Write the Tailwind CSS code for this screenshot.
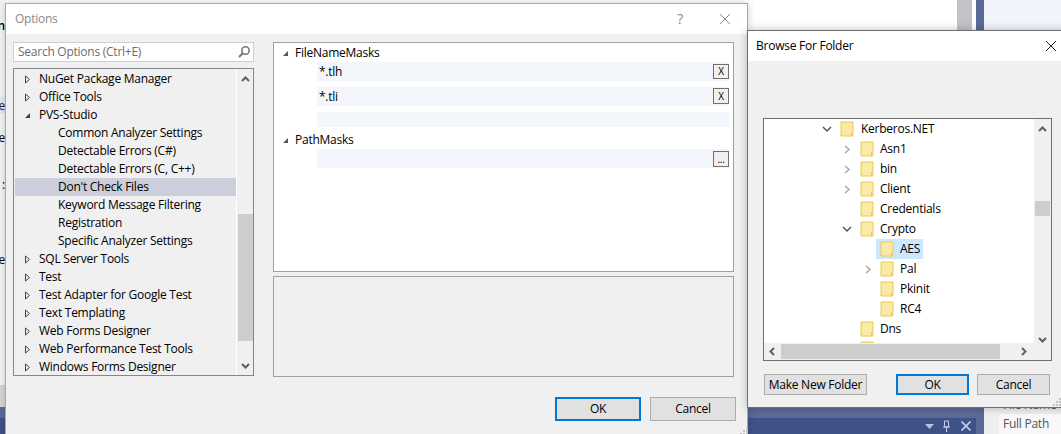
<!DOCTYPE html>
<html lang="en">
<head>
    <meta charset="UTF-8">
    <title>Options</title>
    <script src="https://cdn.jsdelivr.net/npm/@tailwindcss/browser@4"></script>
</head>
<body class="bg-white">
<div class="relative w-[1061px] h-[434px] overflow-hidden bg-white font-['Open_Sans',sans-serif] text-[12px] leading-[18px] tracking-[-0.25px] text-black">

    <!-- IDE behind the dialogs -->
    <div class="absolute left-0 top-0 w-[6px] h-[410px] bg-[#f5f5f5]"></div>
    <div class="absolute left-0 top-[97px] w-[6px] h-[16px] bg-[#e6e8f2]"></div>
    <div class="absolute left-0 top-[385px] w-[6px] h-[25px] bg-[#d8d8d8]"></div>
    <div class="absolute left-[-30px] top-[17px] w-[35px] text-right font-semibold">lin</div>
    <div class="absolute left-[-30px] top-[97px] w-[35px] text-right text-[#223]">ee</div>
    <div class="absolute left-[-30px] top-[129px] w-[35px] text-right">ce</div>
    <div class="absolute left-[-30px] top-[176px] w-[35px] text-right">:</div>
    <div class="absolute left-[-30px] top-[251px] w-[35px] text-right">ne</div>
    <div class="absolute left-0 top-[407px] w-[976px] h-[11px] bg-[#5d6a96]"></div>
    <div class="absolute left-0 top-[418px] w-[976px] h-[16px] bg-[#3f5288] flex items-center justify-end gap-[8px] pr-[5px]">
        <svg width="9" height="5" viewBox="0 0 9 5"><path d="M0 0h9L4.500 5z" fill="#b9c3dc"/></svg>
        <svg width="9" height="12" viewBox="0 0 9 12"><path d="M2.500 1h4v6h-4zM1 7h7M4.500 7v5" fill="none" stroke="#c5cfe6"/></svg>
        <svg class="ml-[2px]" width="10" height="10" viewBox="0 0 10 10"><path d="M0.500 0.500l9 9M9.500 0.500l-9 9" fill="none" stroke="#c5cfe6" stroke-width="1.600"/></svg>
    </div>
    <div class="absolute left-[957px] top-0 w-[15px] h-[30px] bg-[#c2c3c9]"></div>
    <div class="absolute left-[976px] top-0 w-[8px] h-[434px] bg-[#5a6a97]"></div>
    <div class="absolute left-[984px] top-0 w-[77px] h-[30px] bg-[#f2f4fc]"></div>
    <div class="absolute left-[984px] top-[395px] w-[77px] h-[39px] bg-[#eeeeee] text-[#555] flex flex-col">
        <div class="h-[19px] leading-[20px] pl-[19px]">File Name</div>
        <div class="ml-[15px] h-[20px] pl-[4px] leading-[19px] bg-[#f8f8f8]">Full Path</div>
    </div>

    <!-- Options dialog -->
    <div class="absolute left-[5px] top-[3px] w-[743px] h-[440px] bg-[#f0f0f0] border border-[#a8a8a8] shadow-[0_0_8px_rgba(0,0,0,0.2)] flex flex-col">
        <div class="h-[30px] bg-white flex items-center justify-between pl-[9px] pr-[16px] shrink-0">
            <span class="text-[#8a8a8a] text-[12px]">Options</span>
            <div class="flex items-center gap-[36px]">
                <span class="text-[#8a8a8a] text-[14px]">?</span>
                <svg width="12" height="12" viewBox="0 0 12 12"><path d="M1 1l10 10M11 1L1 11" stroke="#8a8a8a" fill="none"/></svg>
            </div>
        </div>
        <div class="flex gap-[19px] pl-[7px] pt-[8px]">
            <!-- Left column -->
            <div class="w-[241px] flex flex-col gap-[6px] shrink-0">
                <div class="h-[20px] bg-white border border-[#ccced8] flex items-center justify-between pl-[4px] pr-[2px]">
                    <span class="text-[#6d6d6d]">Search Options (Ctrl+E)</span>
                    <svg width="14" height="14" viewBox="0 0 14 14"><circle cx="8.5" cy="5.5" r="3.7" fill="none" stroke="#777" stroke-width="1.6"/><path d="M6 8l-4 4" stroke="#777" stroke-width="2.2"/></svg>
                </div>
                <div class="h-[308px] border border-[#82878f] flex overflow-hidden">
                    <div class="flex-1 pt-[1px] pl-[1px]">
                        <div class="h-[18px] flex items-center pl-[9px]"><svg class="mr-[8px]" width="7" height="9" viewBox="0 0 7 9"><path d="M1.5 1l4 3.5-4 3.500z" fill="none" stroke="#444"/></svg>NuGet Package Manager</div>
                        <div class="h-[18px] flex items-center pl-[9px]"><svg class="mr-[8px]" width="7" height="9" viewBox="0 0 7 9"><path d="M1.5 1l4 3.5-4 3.500z" fill="none" stroke="#444"/></svg>Office Tools</div>
                        <div class="h-[18px] flex items-center pl-[9px]"><svg class="mr-[8px]" width="7" height="9" viewBox="0 0 7 9"><path d="M6 2v5H1z" fill="#444"/></svg>PVS-Studio</div>
                        <div class="h-[18px] flex items-center pl-[43px]">Common Analyzer Settings</div>
                        <div class="h-[18px] flex items-center pl-[43px]">Detectable Errors (C#)</div>
                        <div class="h-[18px] flex items-center pl-[43px]">Detectable Errors (C, C++)</div>
                        <div class="h-[18px] flex items-center pl-[43px] bg-[#ccceDB]">Don't Check Files</div>
                        <div class="h-[18px] flex items-center pl-[43px]">Keyword Message Filtering</div>
                        <div class="h-[18px] flex items-center pl-[43px]">Registration</div>
                        <div class="h-[18px] flex items-center pl-[43px]">Specific Analyzer Settings</div>
                        <div class="h-[18px] flex items-center pl-[9px]"><svg class="mr-[8px]" width="7" height="9" viewBox="0 0 7 9"><path d="M1.5 1l4 3.5-4 3.500z" fill="none" stroke="#444"/></svg>SQL Server Tools</div>
                        <div class="h-[18px] flex items-center pl-[9px]"><svg class="mr-[8px]" width="7" height="9" viewBox="0 0 7 9"><path d="M1.5 1l4 3.5-4 3.500z" fill="none" stroke="#444"/></svg>Test</div>
                        <div class="h-[18px] flex items-center pl-[9px]"><svg class="mr-[8px]" width="7" height="9" viewBox="0 0 7 9"><path d="M1.5 1l4 3.5-4 3.500z" fill="none" stroke="#444"/></svg>Test Adapter for Google Test</div>
                        <div class="h-[18px] flex items-center pl-[9px]"><svg class="mr-[8px]" width="7" height="9" viewBox="0 0 7 9"><path d="M1.5 1l4 3.5-4 3.500z" fill="none" stroke="#444"/></svg>Text Templating</div>
                        <div class="h-[18px] flex items-center pl-[9px]"><svg class="mr-[8px]" width="7" height="9" viewBox="0 0 7 9"><path d="M1.5 1l4 3.5-4 3.500z" fill="none" stroke="#444"/></svg>Web Forms Designer</div>
                        <div class="h-[18px] flex items-center pl-[9px]"><svg class="mr-[8px]" width="7" height="9" viewBox="0 0 7 9"><path d="M1.5 1l4 3.5-4 3.500z" fill="none" stroke="#444"/></svg>Web Performance Test Tools</div>
                        <div class="h-[18px] flex items-center pl-[9px]"><svg class="mr-[8px]" width="7" height="9" viewBox="0 0 7 9"><path d="M1.5 1l4 3.5-4 3.500z" fill="none" stroke="#444"/></svg>Windows Forms Designer</div>
                    </div>
                    <!-- Scrollbar -->
                    <div class="w-[17px] border-l border-white flex flex-col items-center">
                        <svg class="mt-[7px] shrink-0" width="9" height="7" viewBox="0 0 9 7"><path d="M1 5l3.5-3.5L8 5" fill="none" stroke="#606060" stroke-width="2"/></svg>
                        <div class="mt-[131px] w-[15px] h-[127px] bg-[#cdcdcd] shrink-0"></div>
                        <svg class="mt-[21px] shrink-0" width="9" height="7" viewBox="0 0 9 7"><path d="M1 2l3.5 3.5L8 2" fill="none" stroke="#606060" stroke-width="2"/></svg>
                    </div>
                </div>
            </div>
            <!-- Right column -->
            <div class="w-[461px] flex flex-col gap-[4px] shrink-0">
                <div class="h-[230px] bg-white border border-[#a0a0a0] pt-[1px]">
                    <div class="h-[18px] flex items-center pl-[8px]"><svg class="mr-[6px]" width="7" height="7" viewBox="0 0 7 7"><path d="M6 1v5H1z" fill="#555"/></svg>FileNameMasks</div>
                    <div class="ml-[43px] mr-[4px] h-[19px] bg-[#f3f6fb] flex items-center justify-between pl-[2px]">*.tlh<span class="w-[16px] h-[15px] bg-[#f0f0f0] border border-[#707070] text-[10px] leading-[13px] text-center">X</span></div>
                    <div class="ml-[43px] mr-[4px] mt-[6px] h-[19px] bg-[#f3f6fb] flex items-center justify-between pl-[2px]">*.tli<span class="-mt-[2px] w-[16px] h-[16px] bg-[#f0f0f0] border border-[#707070] text-[10px] leading-[14px] text-center">X</span></div>
                    <div class="ml-[43px] mr-[4px] mt-[6px] h-[15px] bg-[#f3f6fb]"></div>
                    <div class="mt-[4px] h-[18px] flex items-center pl-[8px]"><svg class="mr-[6px]" width="7" height="7" viewBox="0 0 7 7"><path d="M6 1v5H1z" fill="#555"/></svg>PathMasks</div>
                    <div class="ml-[43px] mr-[4px] h-[19px] bg-[#f3f6fb] flex items-center justify-end"><span class="w-[16px] h-[16px] bg-[#f0f0f0] border border-[#707070] text-[10px] leading-[14px] text-center">...</span></div>
                </div>
                <div class="h-[101px] border border-[#a0a0a0]"></div>
            </div>
        </div>
        <div class="flex gap-[9px] pl-[549px] pt-[20px]">
            <div class="w-[86px] h-[24px] bg-[#e1e1e1] border-2 border-[#0078d7] flex items-center justify-center">OK</div>
            <div class="w-[86px] h-[24px] bg-[#e1e1e1] border border-[#adadad] flex items-center justify-center">Cancel</div>
        </div>
        <!-- Resize grip -->
        <svg class="absolute left-[734px] top-[423px]" width="8" height="8" viewBox="0 0 8 8"><path d="M6 0h2v2H6zM3 3h2v2H3zM6 3h2v2H6zM0 6h2v2H0zM3 6h2v2H3zM6 6h2v2H6z" fill="#c4c4c4"/></svg>
    </div>

    <!-- Browse For Folder dialog -->
    <div class="absolute left-[747px] top-[30px] w-[330px] h-[378px] bg-[#f0f0f0] border border-[#6f6f6f] shadow-[0_0_8px_rgba(0,0,0,0.25)] flex flex-col">
        <div class="h-[30px] bg-white flex items-center pl-[8px] pr-[4px] w-[313px] shrink-0 justify-between">
            <span>Browse For Folder</span>
            <svg width="12" height="12" viewBox="0 0 12 12"><path d="M1 1l10 10M11 1L1 11" stroke="#222" fill="none"/></svg>
        </div>
        <div class="ml-[15px] mt-[57px] w-[289px] h-[243px] border border-[#6f6f6f] bg-white relative overflow-hidden flex flex-col">
            <div class="flex flex-1 overflow-hidden">
                <div class="flex-1">
                    <div class="h-[20px] flex items-center pl-[58px]"><svg class="mr-[8px]" width="10" height="7" viewBox="0 0 10 7"><path d="M1 1l4 4 4-4" fill="none" stroke="#555" stroke-width="1.5"/></svg><svg class="mr-[7px]" width="14" height="16" viewBox="0 0 14 16"><path d="M1 1h12v14H1z" fill="#fbe9a6" stroke="#eec94f"/><path d="M11.5 11v4" stroke="#eec94f"/></svg>Kerberos.NET</div>
                    <div class="h-[20px] flex items-center pl-[78px]"><svg class="mr-[8px]" width="10" height="9" viewBox="0 0 10 9"><path d="M3 1l4 3.5L3 8" fill="none" stroke="#aaa" stroke-width="1.5"/></svg><svg class="mr-[6px]" width="14" height="16" viewBox="0 0 14 16"><path d="M1 1h12v14H1z" fill="#fbe9a6" stroke="#eec94f"/><path d="M11.5 11v4" stroke="#eec94f"/></svg>Asn1</div>
                    <div class="h-[20px] flex items-center pl-[78px]"><svg class="mr-[6px]" width="10" height="9" viewBox="0 0 10 9"><path d="M3 1l4 3.5L3 8" fill="none" stroke="#aaa" stroke-width="1.5"/></svg><svg class="mr-[6px] ml-[2px]" width="14" height="16" viewBox="0 0 14 16"><path d="M1 1h12v14H1z" fill="#fbe9a6" stroke="#eec94f"/><path d="M11.5 11v4" stroke="#eec94f"/></svg>bin</div>
                    <div class="h-[20px] flex items-center pl-[78px]"><svg class="mr-[8px]" width="10" height="9" viewBox="0 0 10 9"><path d="M3 1l4 3.5L3 8" fill="none" stroke="#aaa" stroke-width="1.5"/></svg><svg class="mr-[6px]" width="14" height="16" viewBox="0 0 14 16"><path d="M1 1h12v14H1z" fill="#fbe9a6" stroke="#eec94f"/><path d="M11.5 11v4" stroke="#eec94f"/></svg>Client</div>
                    <div class="h-[20px] flex items-center pl-[96px]"><svg class="mr-[6px]" width="14" height="16" viewBox="0 0 14 16"><path d="M1 1h12v14H1z" fill="#fbe9a6" stroke="#eec94f"/><path d="M11.5 11v4" stroke="#eec94f"/></svg>Credentials</div>
                    <div class="h-[20px] flex items-center pl-[78px]"><svg class="mr-[8px]" width="10" height="7" viewBox="0 0 10 7"><path d="M1 1l4 4 4-4" fill="none" stroke="#555" stroke-width="1.5"/></svg><svg class="mr-[6px]" width="14" height="16" viewBox="0 0 14 16"><path d="M1 1h12v14H1z" fill="#fbe9a6" stroke="#eec94f"/><path d="M11.5 11v4" stroke="#eec94f"/></svg>Crypto</div>
                    <div class="h-[20px] flex items-center pl-[112px]"><div class="flex items-center h-[20px] w-[47px] bg-[#cce8ff] pl-[4px]"><svg class="mr-[6px]" width="14" height="16" viewBox="0 0 14 16"><path d="M1 1h12v14H1z" fill="#fbe9a6" stroke="#eec94f"/><path d="M11.5 11v4" stroke="#eec94f"/></svg>AES</div></div>
                    <div class="h-[20px] flex items-center pl-[99px]"><svg class="mr-[7px]" width="10" height="9" viewBox="0 0 10 9"><path d="M3 1l4 3.5L3 8" fill="none" stroke="#aaa" stroke-width="1.5"/></svg><svg class="mr-[6px]" width="14" height="16" viewBox="0 0 14 16"><path d="M1 1h12v14H1z" fill="#fbe9a6" stroke="#eec94f"/><path d="M11.5 11v4" stroke="#eec94f"/></svg>Pal</div>
                    <div class="h-[20px] flex items-center pl-[116px]"><svg class="mr-[6px]" width="14" height="16" viewBox="0 0 14 16"><path d="M1 1h12v14H1z" fill="#fbe9a6" stroke="#eec94f"/><path d="M11.5 11v4" stroke="#eec94f"/></svg>Pkinit</div>
                    <div class="h-[20px] flex items-center pl-[116px]"><svg class="mr-[6px]" width="14" height="16" viewBox="0 0 14 16"><path d="M1 1h12v14H1z" fill="#fbe9a6" stroke="#eec94f"/><path d="M11.5 11v4" stroke="#eec94f"/></svg>RC4</div>
                    <div class="h-[20px] flex items-center pl-[96px]"><svg class="mr-[6px]" width="14" height="16" viewBox="0 0 14 16"><path d="M1 1h12v14H1z" fill="#fbe9a6" stroke="#eec94f"/><path d="M11.5 11v4" stroke="#eec94f"/></svg>Dns</div>
                    <div class="h-[4px] overflow-hidden pl-[96px] pt-[2px]"><svg width="14" height="16" viewBox="0 0 14 16"><path d="M1 1h12v14H1z" fill="#fbe9a6" stroke="#eec94f"/></svg></div>
                </div>
                <div class="w-[17px] bg-[#f0f0f0] flex flex-col items-center">
                    <svg class="mt-[7px] shrink-0" width="9" height="7" viewBox="0 0 9 7"><path d="M1 5l3.5-3.5L8 5" fill="none" stroke="#606060" stroke-width="2"/></svg>
                    <div class="mt-[68px] w-[15px] h-[15px] bg-[#cdcdcd] shrink-0"></div>
                    <svg class="mt-[120px] shrink-0" width="9" height="7" viewBox="0 0 9 7"><path d="M1 2l3.5 3.5L8 2" fill="none" stroke="#606060" stroke-width="2"/></svg>
                </div>
            </div>
            <div class="h-[17px] bg-[#f0f0f0] flex items-center shrink-0">
                <svg class="ml-[5px] shrink-0" width="7" height="9" viewBox="0 0 7 9"><path d="M5 1L1.5 4.5 5 8" fill="none" stroke="#606060" stroke-width="2"/></svg>
                <div class="ml-[5px] w-[219px] h-[15px] bg-[#cdcdcd] shrink-0"></div>
                <svg class="ml-[20px] shrink-0" width="7" height="9" viewBox="0 0 7 9"><path d="M2 1l3.5 3.5L2 8" fill="none" stroke="#606060" stroke-width="2"/></svg>
            </div>
        </div>
        <div class="flex ml-[16px] mt-[13px]">
            <div class="w-[103px] h-[21px] bg-[#e1e1e1] border border-[#adadad] flex items-center justify-center">Make New Folder</div>
            <div class="ml-[29px] w-[73px] h-[21px] bg-[#e1e1e1] border-2 border-[#0078d7] flex items-center justify-center">OK</div>
            <div class="ml-[8px] w-[73px] h-[21px] bg-[#e1e1e1] border border-[#adadad] flex items-center justify-center">Cancel</div>
        </div>
        <!-- Resize grip -->
        <svg class="absolute left-[305px] top-[367px]" width="8" height="8" viewBox="0 0 8 8"><path d="M6 0h2v2H6zM3 3h2v2H3zM6 3h2v2H6zM0 6h2v2H0zM3 6h2v2H3zM6 6h2v2H6z" fill="#c4c4c4"/></svg>
    </div>
</div>
</body>
</html>
